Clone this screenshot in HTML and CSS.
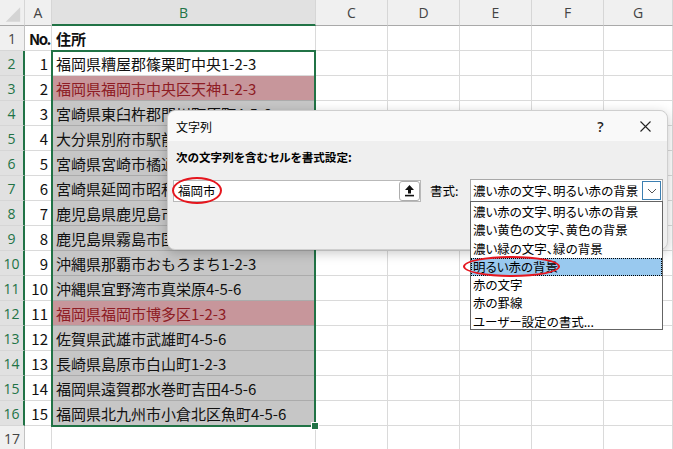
FILE: index.html
```html
<!DOCTYPE html>
<html lang="ja">
<head>
<meta charset="utf-8">
<link rel="stylesheet" href="styles.css">
</head>
<body>
<div class="sheet">
  <div class="grid">
    <div class="c h corner"><svg width="25" height="26" viewBox="0 0 25 26"><polygon points="21,7 21,22 6,22" fill="#d4d4d4"/></svg></div>
    <div class="c h">A</div>
    <div class="c h sel">B</div>
    <div class="c h">C</div>
    <div class="c h">D</div>
    <div class="c h">E</div>
    <div class="c h">F</div>
    <div class="c h last">G</div>

    <div class="c r">1</div><div class="c b hd">No.</div><div class="c txt b">住所</div><div class="c"></div><div class="c"></div><div class="c"></div><div class="c"></div><div class="c"></div>
    <div class="c r sel">2</div><div class="c num">1</div><div class="c txt">福岡県糟屋郡篠栗町中央1-2-3</div><div class="c"></div><div class="c"></div><div class="c"></div><div class="c"></div><div class="c"></div>
    <div class="c r sel">3</div><div class="c num">2</div><div class="c txt g p">福岡県福岡市中央区天神1-2-3</div><div class="c"></div><div class="c"></div><div class="c"></div><div class="c"></div><div class="c"></div>
    <div class="c r sel">4</div><div class="c num">3</div><div class="c txt g">宮崎県東臼杵郡門川町原町4-5-6</div><div class="c"></div><div class="c"></div><div class="c"></div><div class="c"></div><div class="c"></div>
    <div class="c r sel">5</div><div class="c num">4</div><div class="c txt g">大分県別府市駅前町1-2-3</div><div class="c"></div><div class="c"></div><div class="c"></div><div class="c"></div><div class="c"></div>
    <div class="c r sel">6</div><div class="c num">5</div><div class="c txt g">宮崎県宮崎市橘通東4-5-6</div><div class="c"></div><div class="c"></div><div class="c"></div><div class="c"></div><div class="c"></div>
    <div class="c r sel">7</div><div class="c num">6</div><div class="c txt g">宮崎県延岡市昭和町1-2-3</div><div class="c"></div><div class="c"></div><div class="c"></div><div class="c"></div><div class="c"></div>
    <div class="c r sel">8</div><div class="c num">7</div><div class="c txt g">鹿児島県鹿児島市山下町4-5-6</div><div class="c"></div><div class="c"></div><div class="c"></div><div class="c"></div><div class="c"></div>
    <div class="c r sel">9</div><div class="c num">8</div><div class="c txt g">鹿児島県霧島市国分中央1-2-3</div><div class="c"></div><div class="c"></div><div class="c"></div><div class="c"></div><div class="c"></div>
    <div class="c r sel">10</div><div class="c num">9</div><div class="c txt g">沖縄県那覇市おもろまち1-2-3</div><div class="c"></div><div class="c"></div><div class="c"></div><div class="c"></div><div class="c"></div>
    <div class="c r sel">11</div><div class="c num">10</div><div class="c txt g">沖縄県宜野湾市真栄原4-5-6</div><div class="c"></div><div class="c"></div><div class="c"></div><div class="c"></div><div class="c"></div>
    <div class="c r sel">12</div><div class="c num">11</div><div class="c txt g p">福岡県福岡市博多区1-2-3</div><div class="c"></div><div class="c"></div><div class="c"></div><div class="c"></div><div class="c"></div>
    <div class="c r sel">13</div><div class="c num">12</div><div class="c txt g">佐賀県武雄市武雄町4-5-6</div><div class="c"></div><div class="c"></div><div class="c"></div><div class="c"></div><div class="c"></div>
    <div class="c r sel">14</div><div class="c num">13</div><div class="c txt g">長崎県島原市白山町1-2-3</div><div class="c"></div><div class="c"></div><div class="c"></div><div class="c"></div><div class="c"></div>
    <div class="c r sel">15</div><div class="c num">14</div><div class="c txt g">福岡県遠賀郡水巻町吉田4-5-6</div><div class="c"></div><div class="c"></div><div class="c"></div><div class="c"></div><div class="c"></div>
    <div class="c r sel">16</div><div class="c num">15</div><div class="c txt g">福岡県北九州市小倉北区魚町4-5-6</div><div class="c"></div><div class="c"></div><div class="c"></div><div class="c"></div><div class="c"></div>
    <div class="c r">17</div><div class="c"></div><div class="c"></div><div class="c"></div><div class="c"></div><div class="c"></div><div class="c"></div><div class="c"></div>
  </div>

  <div class="selection"><span class="handle"></span></div>

  <div class="dialog">
    <div class="dlg-title">
      <span class="dlg-name">文字列</span>
      <span class="tb-btn help">?</span>
      <span class="tb-btn close"><svg width="11" height="11" viewBox="0 0 11 11"><path d="M0.5 0.5 L10.5 10.5 M10.5 0.5 L0.5 10.5" stroke="#222" stroke-width="1.1" fill="none"/></svg></span>
    </div>
    <div class="dlg-body">
      <div class="dlg-label">次の文字列を含むセルを書式設定:</div>
      <div class="dlg-row">
        <div class="input">
          <span class="input-text">福岡市</span>
          <span class="up-btn"><svg width="11" height="13" viewBox="0 0 11 13"><path d="M5.5 1 L10 6 H7 V9.5 H4 V6 H1 Z" fill="#111"/><rect x="1" y="10.8" width="9" height="1.6" fill="#111"/></svg></span>
        </div>
        <span class="fmt-label">書式:</span>
        <div class="combo">
          <span class="combo-text">濃い赤の文字、明るい赤の背景</span>
          <span class="combo-btn"><svg width="10" height="6" viewBox="0 0 10 6"><path d="M1 1 L5 5 L9 1" stroke="#555" stroke-width="1" fill="none"/></svg></span>
        </div>
      </div>
    </div>
  </div>

  <div class="listbox">
    <div class="item">濃い赤の文字、明るい赤の背景</div>
    <div class="item">濃い黄色の文字、黄色の背景</div>
    <div class="item">濃い緑の文字、緑の背景</div>
    <div class="item active">明るい赤の背景</div>
    <div class="item">赤の文字</div>
    <div class="item">赤の罫線</div>
    <div class="item">ユーザー設定の書式...</div>
  </div>

  <div class="mark mark-input"></div>
  <div class="mark mark-item"></div>
</div>
</body>
</html>
```

FILE: styles.css
```css
body {
  margin: 0;
}

.sheet {
  position: relative;
  width: 673px;
  height: 449px;
  overflow: hidden;
  background: #fff;
  font-family: "Noto Sans CJK JP", sans-serif;
}

.grid {
  display: grid;
  grid-template-columns: 25px 27px 264px 72px 72px 72px 72px 69px;
  grid-template-rows: 26px repeat(17, 25px);
}

.c {
  box-sizing: border-box;
  border-right: 1px solid #dadada;
  border-bottom: 1px solid #dadada;
  display: flex;
  align-items: center;
  white-space: nowrap;
  overflow: hidden;
  font-size: 15px;
  color: #111;
}

.h {
  background: #f0f0f0;
  justify-content: center;
  font-family: "Open Sans", sans-serif;
  font-size: 14px;
  color: #444;
  border-bottom-color: #a9a9a9;
  border-right-color: #d6d6d6;
}

.h.corner {
  padding: 0;
  align-items: stretch;
}

.h.sel {
  background: #e1e1e1;
  color: #217346;
  border-bottom: 2px solid #217346;
}

.r {
  background: #f0f0f0;
  justify-content: center;
  font-family: "Open Sans", sans-serif;
  font-size: 14px;
  color: #444;
  border-right-color: #c2c2c2;
  border-bottom-color: #d6d6d6;
}

.r.sel {
  background: #e1e1e1;
  color: #217346;
  border-right: 2px solid #217346;
}

.num {
  justify-content: flex-end;
  padding-right: 3px;
}

.hd {
  padding-left: 4px;
  letter-spacing: -1.5px;
}

.b {
  font-weight: bold;
}

.txt {
  padding-left: 4px;
}

.g {
  background: #c6c6c6;
  border-bottom-color: #ababab;
}

.p {
  background: #c7969b;
  color: #8e1c24;
}

.selection {
  position: absolute;
  left: 51px;
  top: 50px;
  width: 265px;
  height: 377px;
  box-sizing: border-box;
  border: 2px solid #217346;
}

.handle {
  position: absolute;
  right: -5px;
  bottom: -5px;
  width: 6px;
  height: 6px;
  background: #217346;
  border: 1px solid #fff;
}

.dialog {
  position: absolute;
  left: 167px;
  top: 110px;
  width: 501px;
  height: 140px;
  box-sizing: border-box;
  border: 1px solid #cfcfcf;
  border-radius: 8px;
  background: #efefef;
  box-shadow: 0 3px 12px rgba(0, 0, 0, 0.22);
  font-size: 12px;
  color: #000;
  font-feature-settings: "palt";
}

.dlg-title {
  height: 30px;
  display: flex;
  align-items: center;
  padding-left: 8px;
  background: #f9f9f9;
  border-radius: 8px 8px 0 0;
}

.dlg-name {
  margin-right: auto;
}

.tb-btn {
  height: 30px;
  display: flex;
  align-items: center;
  justify-content: center;
}

.help {
  width: 45px;
  font-family: "Open Sans", sans-serif;
  font-size: 14px;
  font-weight: 600;
  color: #222;
}

.close {
  width: 44px;
}

.dlg-body {
  padding: 8px 0 0 5px;
}

.dlg-label {
  padding-left: 3px;
  font-weight: bold;
  font-size: 11.6px;
  line-height: 16px;
}

.dlg-row {
  margin-top: 14px;
  display: flex;
  align-items: center;
}

.input {
  width: 248px;
  height: 22px;
  box-sizing: border-box;
  border: 1px solid #b9b9b9;
  background: #fff;
  display: flex;
  align-items: center;
}

.input-text {
  padding-left: 4px;
  font-size: 12.5px;
}

.up-btn {
  margin-left: auto;
  margin-right: 0;
  width: 21px;
  height: 20px;
  box-sizing: border-box;
  border: 1px solid #adadad;
  border-radius: 3px;
  background: #fff;
  display: flex;
  align-items: center;
  justify-content: center;
}

.fmt-label {
  width: 40px;
  margin-left: 9px;
  font-size: 12.5px;
}

.combo {
  width: 193px;
  height: 23px;
  box-sizing: border-box;
  border: 1px solid #a8a8a8;
  background: #fff;
  display: flex;
  align-items: center;
}

.combo-text {
  padding-left: 2px;
  font-size: 12.5px;
}

.combo-btn {
  margin-left: auto;
  margin-right: 1px;
  width: 19px;
  height: 19px;
  box-sizing: border-box;
  border: 1px solid #3c7fb1;
  background: #fff;
  display: flex;
  align-items: center;
  justify-content: center;
}

.listbox {
  position: absolute;
  left: 470px;
  top: 201px;
  width: 193px;
  height: 129px;
  box-sizing: border-box;
  border: 1px solid #646464;
  background: #fff;
  padding-top: 1px;
  font-size: 12.5px;
  font-feature-settings: "palt";
  color: #000;
}

.item {
  height: 18.3px;
  line-height: 18.3px;
  padding-left: 2px;
  box-sizing: border-box;
  white-space: nowrap;
}

.item.active {
  background: #99c9ef;
  outline: 1px dotted #000;
  outline-offset: -1px;
}

.mark {
  position: absolute;
  box-sizing: border-box;
  border: 2px solid #e5161e;
  border-radius: 50%;
}

.mark-input {
  left: 172px;
  top: 177px;
  width: 50px;
  height: 27px;
}

.mark-item {
  left: 463px;
  top: 256px;
  width: 97px;
  height: 21px;
}
```
